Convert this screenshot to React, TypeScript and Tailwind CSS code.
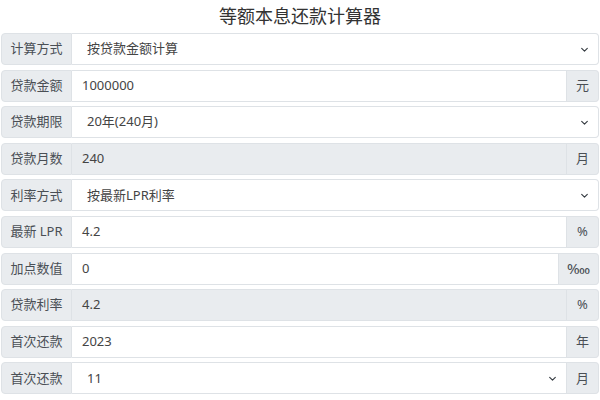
import React from 'react';

type Row = {
  label: string;
  value: string;
  kind: 'input' | 'select';
  suffix?: string;
  readOnly?: boolean;
};

const rows: Row[] = [
  { label: '计算方式', value: '按贷款金额计算', kind: 'select' },
  { label: '贷款金额', value: '1000000', kind: 'input', suffix: '元' },
  { label: '贷款期限', value: '20年(240月)', kind: 'select' },
  { label: '贷款月数', value: '240', kind: 'input', suffix: '月', readOnly: true },
  { label: '利率方式', value: '按最新LPR利率', kind: 'select' },
  { label: '最新 LPR', value: '4.2', kind: 'input', suffix: '%' },
  { label: '加点数值', value: '0', kind: 'input', suffix: '‱' },
  { label: '贷款利率', value: '4.2', kind: 'input', suffix: '%', readOnly: true },
  { label: '首次还款', value: '2023', kind: 'input', suffix: '年' },
  { label: '首次还款', value: '11', kind: 'select', suffix: '月' },
];

const Chevron = () => (
  <svg width="9" height="9" viewBox="0 0 16 16" className="shrink-0">
    <path d="M3 6l5 5 5-5" fill="none" stroke="#343a40" strokeWidth="2" strokeLinecap="round" strokeLinejoin="round" />
  </svg>
);

const FormRow: React.FC<{ row: Row }> = ({ row }) => {
  const hasSuffix = !!row.suffix;
  return (
    <div className="flex h-[32px] text-[13px] text-[#444]">
      <div className="w-[71px] shrink-0 flex items-center justify-center bg-[#e9ecef] border border-[#dee2e6] rounded-l-[4px] text-[#4a4f55]">
        {row.label}
      </div>
      <div
        className={`flex-1 flex items-center border border-l-0 border-[#dee2e6] ${
          row.readOnly ? 'bg-[#e9ecef]' : 'bg-white'
        } ${hasSuffix ? '' : 'rounded-r-[4px]'} ${row.kind === 'select' ? 'pl-[15px] pr-[9px]' : 'pl-[10px] pr-[10px]'}`}
      >
        <span className="flex-1">{row.value}</span>
        {row.kind === 'select' && <Chevron />}
      </div>
      {hasSuffix && (
        <div
          className={`shrink-0 flex items-center justify-center bg-[#e9ecef] border border-l-0 border-[#dee2e6] rounded-r-[4px] text-[#4a4f55] ${
            row.suffix === '‱' ? 'w-[40px] text-[15px]' : 'w-[32px]'
          }`}
        >
          {row.suffix}
        </div>
      )}
    </div>
  );
};

export default function App() {
  return (
    <div
      className="w-[600px] h-[400px] bg-white px-[1px] overflow-hidden"
      style={{ fontFamily: '"Noto Sans", "Noto Sans CJK SC", sans-serif' }}
    >
      <div className="h-[33px] flex items-center justify-center text-[18px] text-[#333]">
        等额本息还款计算器
      </div>
      <div className="flex flex-col gap-[4.6px]">
        {rows.map((r, i) => (
          <FormRow key={i} row={r} />
        ))}
      </div>
    </div>
  );
}
